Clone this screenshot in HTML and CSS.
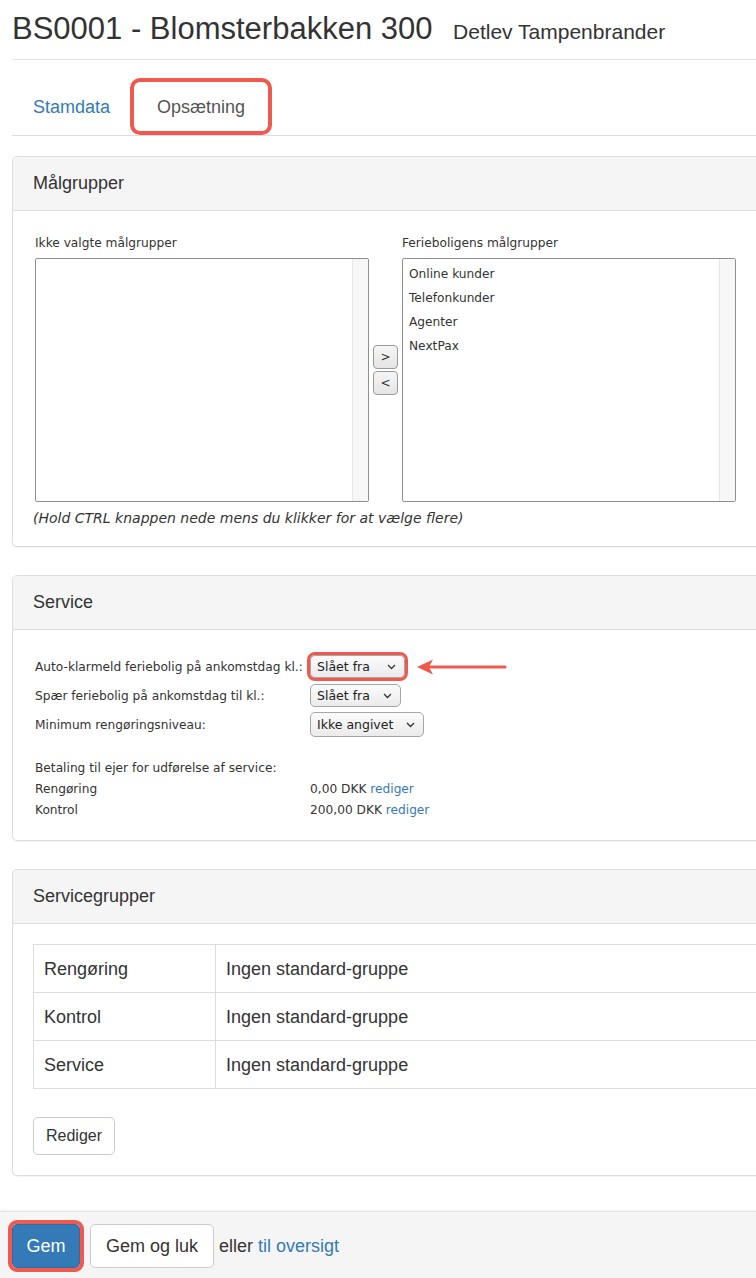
FILE: index.html
```html
<!DOCTYPE html>
<html lang="da">
<head>
<meta charset="utf-8">
<title>BS0001 - Blomsterbakken 300</title>
<link rel="stylesheet" href="styles.css">
</head>
<body>
<div class="page">
  <header class="page-header">
    <h1 class="title">BS0001 - Blomsterbakken 300 <small class="owner">Detlev Tampenbrander</small></h1>
  </header>

  <nav class="tabs">
    <a class="tab" href="#">Stamdata</a>
    <a class="tab active" href="#">Opsætning</a>
  </nav>

  <section class="panel">
    <div class="panel-heading">Målgrupper</div>
    <div class="panel-body">
      <div class="dual">
        <div class="dual-label">Ikke valgte målgrupper</div>
        <div class="dual-mid">
          <button class="move">&gt;</button>
          <button class="move">&lt;</button>
        </div>
        <div class="dual-label">Ferieboligens målgrupper</div>
        <div class="listbox"><div class="lb-items"></div><div class="lb-scroll"></div></div>
        <div class="listbox">
          <div class="lb-items">
            <div class="opt">Online kunder</div>
            <div class="opt">Telefonkunder</div>
            <div class="opt">Agenter</div>
            <div class="opt">NextPax</div>
          </div>
          <div class="lb-scroll"></div>
        </div>
      </div>
      <p class="hint">(Hold CTRL knappen nede mens du klikker for at vælge flere)</p>
    </div>
  </section>

  <section class="panel">
    <div class="panel-heading">Service</div>
    <div class="panel-body service">
      <div class="srow">
        <span class="slabel">Auto-klarmeld feriebolig på ankomstdag kl.:</span>
        <span class="sel marked">Slået fra <svg class="chev" width="9" height="6" viewBox="0 0 9 6"><path d="M1 1l3.5 3.5L8 1" fill="none" stroke="#333" stroke-width="1.3"/></svg></span>
        <svg class="arrow" width="92" height="18" viewBox="0 0 92 18"><path d="M14 9H89" stroke="#ee5a4f" stroke-width="3" stroke-linecap="round"/><path d="M1 9L17 1.5L13 9L17 16.5Z" fill="#ee5a4f"/></svg>
      </div>
      <div class="srow">
        <span class="slabel">Spær feriebolig på ankomstdag til kl.:</span>
        <span class="sel">Slået fra <svg class="chev" width="9" height="6" viewBox="0 0 9 6"><path d="M1 1l3.5 3.5L8 1" fill="none" stroke="#333" stroke-width="1.3"/></svg></span>
      </div>
      <div class="srow">
        <span class="slabel">Minimum rengøringsniveau:</span>
        <span class="sel tall">Ikke angivet <svg class="chev" width="9" height="6" viewBox="0 0 9 6"><path d="M1 1l3.5 3.5L8 1" fill="none" stroke="#333" stroke-width="1.3"/></svg></span>
      </div>
      <div class="pay">
        <div class="prow">Betaling til ejer for udførelse af service:</div>
        <div class="prow"><span class="slabel">Rengøring</span><span>0,00 DKK <a href="#">rediger</a></span></div>
        <div class="prow"><span class="slabel">Kontrol</span><span>200,00 DKK <a href="#">rediger</a></span></div>
      </div>
    </div>
  </section>

  <section class="panel">
    <div class="panel-heading">Servicegrupper</div>
    <div class="panel-body groups">
      <table class="gtable">
        <tr><td class="gname">Rengøring</td><td>Ingen standard-gruppe</td></tr>
        <tr><td class="gname">Kontrol</td><td>Ingen standard-gruppe</td></tr>
        <tr><td class="gname">Service</td><td>Ingen standard-gruppe</td></tr>
      </table>
      <button class="btn btn-sm">Rediger</button>
    </div>
  </section>
</div>

<footer class="footer">
  <button class="btn btn-primary marked-btn">Gem</button>
  <button class="btn">Gem og luk</button>
  <span class="or">eller <a href="#">til oversigt</a></span>
</footer>
</body>
</html>
```

FILE: styles.css
```css
html, body {
  margin: 0;
  padding: 0;
  overflow: hidden;
  background: #fff;
}
body {
  width: 756px;
  font-family: "Liberation Sans", Arial, Helvetica, sans-serif;
  font-size: 18px;
  color: #333;
}
a { color: #337ab7; text-decoration: none; }

.page {
  padding-left: 12px;
  width: 790px;
}

.page-header {
  padding-top: 12px;
  padding-bottom: 11px;
  border-bottom: 1px solid #e5e5e5;
}
.title {
  margin: 0;
  font-size: 31px;
  line-height: 33px;
  font-weight: 400;
  color: #333;
}
.owner {
  font-size: 21px;
  margin-left: 12px;
  color: #333;
}

.tabs {
  display: flex;
  margin-top: 20px;
  border-bottom: 1px solid #ddd;
  padding-left: 1px;
}
.tab {
  display: block;
  padding: 17px 20px 18px;
  line-height: 20px;
  margin-right: 4px;
  border-radius: 5px 5px 0 0;
}
.tab.active {
  color: #555;
  padding-left: 23px;
  padding-right: 23px;
  margin-left: 0;
  box-shadow: 0 0 0 4px #ee5a4f;
  border-radius: 6px;
  height: 18px;
  padding-top: 15px;
  padding-bottom: 16px;
  margin-top: 2px;
  margin-bottom: 2px;
}

.panel {
  margin-top: 20px;
  border: 1px solid #ddd;
  border-radius: 5px;
  background: #fff;
  box-shadow: 0 1px 1px rgba(0,0,0,0.05);
}
.panel + .panel { margin-top: 28px; }
.panel-heading {
  background: #f5f5f5;
  border-bottom: 1px solid #ddd;
  border-radius: 5px 5px 0 0;
  padding: 16px 20px;
  line-height: 21px;
  font-size: 18px;
  color: #333;
}
.panel-body {
  padding: 24px 20px 20px 20px;
}

/* dual list */
.dual {
  display: grid;
  grid-template-columns: 334px 33px 334px;
  grid-template-rows: 16px 244px;
  row-gap: 7px;
  margin-left: 2px;
  font-family: "DejaVu Sans", Verdana, sans-serif;
  font-size: 12.2px;
  color: #333;
}
.dual-label { line-height: 16px; }
.dual-mid {
  grid-column: 2;
  grid-row: 1 / span 2;
  align-self: center;
  display: flex;
  flex-direction: column;
  align-items: center;
  gap: 2px;
  padding-top: 2px;
}
.move {
  width: 25px;
  height: 24px;
  padding: 0;
  border: 1px solid #9a9a9a;
  border-radius: 4px;
  background: linear-gradient(#f6f6f6, #e4e4e4);
  font-family: "DejaVu Sans", Verdana, sans-serif;
  font-size: 12px;
  color: #333;
}
.listbox {
  display: flex;
  border: 1px solid #8f8f8f;
  border-radius: 2px;
  box-sizing: border-box;
  background: #fff;
}
.lb-items {
  flex: 1;
  padding: 3px 6px;
}
.opt { line-height: 24px; }
.lb-scroll {
  width: 15px;
  background: #f7f7f7;
  border-left: 1px solid #e6e6e6;
}
.hint {
  margin: 8px 0 0;
  font-family: "DejaVu Sans", Verdana, sans-serif;
  font-size: 14px;
  font-style: italic;
  line-height: 16px;
  color: #333;
  letter-spacing: 0;
}

/* service */
.service {
  padding-top: 22px;
  padding-bottom: 19px;
  font-family: "DejaVu Sans", Verdana, sans-serif;
  font-size: 12.2px;
  margin-left: 2px;
}
.srow {
  display: flex;
  align-items: center;
  height: 29px;
}
.slabel {
  width: 275px;
  flex: none;
}
.sel {
  display: inline-flex;
  align-items: center;
  justify-content: space-between;
  box-sizing: border-box;
  height: 23px;
  width: 91px;
  padding: 0 8px 0 6px;
  border: 1px solid #a6a6a6;
  border-radius: 5px;
  background: linear-gradient(#fbfbfb, #ebebeb);
  font-size: 12.5px;
  color: #222;
}
.sel.tall { width: 114px; height: 25px; }
.sel.marked {
  width: 95px;
  outline: 3px solid #ee5a4f;
  outline-offset: 0px;
}
.chev { flex: none; }
.arrow {
  margin-left: 11px;
  flex: none;
}
.pay { margin-top: 19px; }
.prow {
  display: flex;
  line-height: 21px;
}

/* groups */
.groups {
  padding-top: 20px;
  padding-bottom: 20px;
}
.gtable {
  width: calc(100% + 20px);
  border-collapse: collapse;
  font-size: 18px;
}
.gtable td {
  border: 1px solid #ddd;
  height: 47px;
  padding: 0 10px;
  line-height: 20px;
}
.gtable td.gname { width: 161px; }

.btn {
  font-family: "Liberation Sans", Arial, sans-serif;
  font-size: 18px;
  color: #333;
  background: #fff;
  border: 1px solid #ccc;
  border-radius: 5px;
  padding: 0 15px;
  height: 44px;
  cursor: pointer;
}
.btn-sm {
  margin-top: 28px;
  font-size: 16px;
  height: 38px;
  width: 82px;
  padding: 0;
}
.btn-primary {
  background: #337ab7;
  border-color: #2e6da4;
  color: #fff;
}

.footer {
  margin-top: 35px;
  background: #f5f5f5;
  border-top: 1px solid #e3e3e3;
  box-shadow: 0 -1px 3px rgba(0,0,0,0.06);
  padding: 12px 0 20px 12px;
  display: flex;
  align-items: flex-start;
  gap: 10px;
  height: 80px;
}
.marked-btn {
  width: 68px;
  padding: 0;
  outline: 4px solid #ee5a4f;
  outline-offset: 0px;
}
.or {
  margin-left: -5px;
  line-height: 44px;
  font-size: 18px;
}
```
